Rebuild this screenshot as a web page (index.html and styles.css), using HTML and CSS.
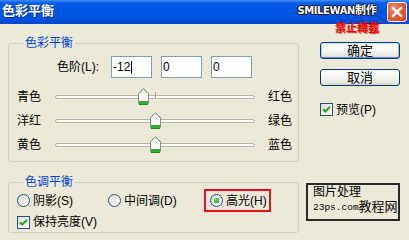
FILE: index.html
```html
<!DOCTYPE html>
<html lang="zh-CN">
<head>
  <meta charset="UTF-8">
  <title>色彩平衡</title>
  <link rel="stylesheet" href="styles.css">
</head>
<body>
  <div class="dialog">
    <div class="title-bar">
      <h1>色彩平衡</h1>
      <div class="credit"><span class="brand">SMILEWAN</span>制作</div>
      <div class="close-btn">
        <svg width="18" height="18" viewBox="0 0 18 18">
          <path d="M5 5L13 13M13 5L5 13" stroke="white" stroke-width="2.4" stroke-linecap="square"/>
        </svg>
      </div>
    </div>

    <div class="dialog-body">
      <div class="left-col">
        <fieldset class="group">
          <legend>色彩平衡</legend>
          <div class="levels">
            <span class="levels-label">色阶(L):</span>
            <div class="num-box">-12<span class="caret"></span></div>
            <div class="num-box">0</div>
            <div class="num-box">0</div>
          </div>

          <div class="sliders">
            <div class="slider-row">
              <span class="slider-label">青色</span>
              <div class="track">
                <div class="tick"></div>
                <div class="thumb" style="left: 44%">
                  <svg width="11" height="17" viewBox="0 0 11 17">
                    <path d="M5.5 0.5L10.5 5.5V15.5H0.5V5.5Z" fill="#f7f7f3" stroke="#8e8d86"/>
                    <path d="M5.5 1.6L9.4 5.5M5.5 1.6L1.6 5.5" stroke="#a9dca9"/>
                    <rect x="1" y="13" width="9" height="3" fill="#2fae2f"/>
                    <path d="M1 16.5H10" stroke="#1d8a1d"/>
                  </svg>
                </div>
              </div>
              <span class="slider-label">红色</span>
            </div>
            <div class="slider-row">
              <span class="slider-label">洋红</span>
              <div class="track">
                <div class="tick"></div>
                <div class="thumb" style="left: 50%">
                  <svg width="11" height="17" viewBox="0 0 11 17">
                    <path d="M5.5 0.5L10.5 5.5V15.5H0.5V5.5Z" fill="#f7f7f3" stroke="#8e8d86"/>
                    <path d="M5.5 1.6L9.4 5.5M5.5 1.6L1.6 5.5" stroke="#a9dca9"/>
                    <rect x="1" y="13" width="9" height="3" fill="#2fae2f"/>
                    <path d="M1 16.5H10" stroke="#1d8a1d"/>
                  </svg>
                </div>
              </div>
              <span class="slider-label">绿色</span>
            </div>
            <div class="slider-row">
              <span class="slider-label">黄色</span>
              <div class="track">
                <div class="tick"></div>
                <div class="thumb" style="left: 50%">
                  <svg width="11" height="17" viewBox="0 0 11 17">
                    <path d="M5.5 0.5L10.5 5.5V15.5H0.5V5.5Z" fill="#f7f7f3" stroke="#8e8d86"/>
                    <path d="M5.5 1.6L9.4 5.5M5.5 1.6L1.6 5.5" stroke="#a9dca9"/>
                    <rect x="1" y="13" width="9" height="3" fill="#2fae2f"/>
                    <path d="M1 16.5H10" stroke="#1d8a1d"/>
                  </svg>
                </div>
              </div>
              <span class="slider-label">蓝色</span>
            </div>
          </div>
        </fieldset>

        <fieldset class="group tone">
          <legend>色调平衡</legend>
          <div class="tone-row">
            <label class="radio-item shadows"><span class="radio"></span>阴影(S)</label>
            <label class="radio-item midtones"><span class="radio"></span>中间调(D)</label>
            <label class="radio-item highlight"><span class="radio checked"><span class="dot"></span></span>高光(H)</label>
          </div>
          <label class="check-item keep-lum">
            <span class="checkbox">
              <svg width="11" height="11" viewBox="0 0 11 11">
                <path d="M2 5.2L4.3 7.6L9 2.8" fill="none" stroke="#21a121" stroke-width="2"/>
              </svg>
            </span>保持亮度(V)
          </label>
        </fieldset>
      </div>

      <div class="right-col">
        <div class="no-repost">禁止轉載</div>
        <button class="btn default">确定</button>
        <button class="btn">取消</button>
        <label class="check-item preview">
          <span class="checkbox">
            <svg width="11" height="11" viewBox="0 0 11 11">
              <path d="M2 5.2L4.3 7.6L9 2.8" fill="none" stroke="#21a121" stroke-width="2"/>
            </svg>
          </span>预览(P)
        </label>
        <div class="watermark">
          <div class="wm-top">图片处理</div>
          <div class="wm-bottom">
            <span class="wm-url">23ps.com</span><span class="wm-name">教程网</span>
          </div>
        </div>
      </div>
    </div>
  </div>
</body>
</html>
```

FILE: styles.css
```css
body {
  margin: 0;
  font-family: "Liberation Sans", "Noto Sans CJK SC", sans-serif;
  font-size: 12px;
  line-height: 14px;
  color: #000;
  background-color: #ece9d8;
}

.dialog {
  width: 409px;
  height: 240px;
  overflow: hidden;
}

/* title bar */
.title-bar {
  height: 24px;
  display: flex;
  align-items: flex-start;
  background: linear-gradient(to bottom, #3d8df5 0, #0a5de8 3px, #0056e6 8px, #0053e0 18px, #0047ca 24px);
}

.title-bar h1 {
  margin: 0;
  padding-left: 2px;
  font-size: 13px;
  line-height: 22px;
  font-weight: bold;
  color: white;
  text-shadow: 1px 1px 0 #0b2f8e;
}

.credit {
  margin: 2px 10px 0 auto;
  font-size: 11px;
  line-height: 16px;
  font-weight: bold;
  color: white;
  text-shadow: -1px 0 0 #111, 1px 0 0 #111, 0 -1px 0 #111, 0 1px 0 #111;
}

.credit .brand {
  font-family: "DejaVu Sans", sans-serif;
  font-size: 10px;
  letter-spacing: -0.4px;
}

.close-btn {
  width: 20px;
  height: 20px;
  box-sizing: border-box;
  margin: 2px 2px 0 0;
  border: 1px solid #fff;
  border-radius: 3px;
  background: radial-gradient(circle at 30% 30%, #f08a68 0%, #e2572f 55%, #c8401b 100%);
  display: flex;
  align-items: center;
  justify-content: center;
}

/* body */
.dialog-body {
  display: flex;
}

.left-col {
  width: 291px;
  margin-left: 8px;
  padding-top: 13px;
}

.right-col {
  width: 94px;
  margin-left: 7px;
  display: flex;
  flex-direction: column;
  align-items: flex-start;
}

.group {
  margin: 0;
  padding: 0 0 4px;
  min-width: 0;
  border: 1px solid #d0d0bf;
  border-radius: 3px;
}

.group legend {
  margin-left: 14px;
  padding: 0 2px;
  font-size: 12px;
  line-height: 12px;
  color: #0046d5;
}

.group.tone {
  margin-top: 14px;
  padding-bottom: 3px;
}

/* levels */
.levels {
  display: flex;
  align-items: center;
  height: 22px;
  margin-top: 7px;
  padding-left: 48px;
}

.levels-label {
  margin-right: 12px;
}

.num-box {
  width: 41px;
  height: 22px;
  box-sizing: border-box;
  margin-right: 9px;
  padding-left: 1px;
  border: 1px solid #7f9db9;
  background-color: white;
  display: flex;
  align-items: center;
}

.caret {
  display: inline-block;
  width: 1px;
  height: 13px;
  margin-left: 1px;
  background-color: #000;
}

/* sliders */
.sliders {
  margin-top: 7px;
}

.slider-row {
  display: flex;
  align-items: center;
  height: 24px;
  padding-left: 8px;
}

.slider-label {
  width: 24px;
}

.track {
  position: relative;
  width: 200px;
  height: 4px;
  box-sizing: border-box;
  margin: 0 13px 0 14px;
  border: 1px solid #b7b4a7;
  border-radius: 2px;
  background-color: #fdfdfb;
}

.tick {
  position: absolute;
  left: 50%;
  top: -4px;
  width: 1px;
  height: 6px;
  background-color: #a6a49a;
}

.thumb {
  position: absolute;
  top: -8px;
  width: 11px;
  height: 17px;
  margin-left: -5px;
}

.thumb svg {
  display: block;
}

/* tone balance */
.tone-row {
  display: flex;
  align-items: center;
  height: 23px;
  margin-top: 1px;
  padding-left: 8px;
}

.radio-item {
  display: flex;
  align-items: center;
  gap: 3px;
}

.radio-item.shadows {
  width: 91px;
}

.radio-item.midtones {
  width: 96px;
}

.radio-item.highlight {
  height: 23px;
  box-sizing: border-box;
  padding: 0 2px 0 4px;
  border: 2px solid #e8101a;
}

.radio {
  width: 13px;
  height: 13px;
  box-sizing: border-box;
  border: 1px solid #1c5180;
  border-radius: 50%;
  background: linear-gradient(135deg, #d8d7cf 0%, #f4f4f0 60%, #ffffff 100%);
  display: flex;
  align-items: center;
  justify-content: center;
}

.radio .dot {
  width: 5px;
  height: 5px;
  border-radius: 50%;
  background: radial-gradient(circle at 40% 40%, #7fe07f 0%, #21a121 70%);
}

.check-item {
  display: flex;
  align-items: center;
  gap: 3px;
  height: 14px;
}

.check-item.keep-lum {
  margin: 3px 0 0 8px;
}

.checkbox {
  width: 13px;
  height: 13px;
  box-sizing: border-box;
  border: 1px solid #1c5180;
  background: linear-gradient(135deg, #dcdcd7 0%, #f6f6f3 60%, #ffffff 100%);
  display: flex;
  align-items: center;
  justify-content: center;
}

.checkbox svg {
  display: block;
}

/* right column */
.no-repost {
  margin: -1px 0 0 29px;
  font-size: 11px;
  line-height: 11px;
  font-weight: bold;
  color: #ff0000;
  text-shadow: 1px 1px 0 rgba(110, 0, 0, 0.55);
}

.btn {
  width: 80px;
  height: 17px;
  margin: 8px 0 0 14px;
  padding: 0;
  font-family: "Liberation Sans", "Noto Sans CJK SC", sans-serif;
  font-size: 13px;
  line-height: 15px;
  color: #000;
  border: 1px solid #003c74;
  border-radius: 3px;
  background: linear-gradient(to bottom, #ffffff 0%, #f4f4f0 55%, #e6e5de 85%, #d6d0c5 100%);
}

.btn.default {
  box-shadow: inset 0 1px 0 0 #cee7ff, inset 0 -1px 0 0 #6982ee, inset 1px 0 0 0 #b6d0f8, inset -1px 0 0 0 #98b6ee;
}

.btn + .btn {
  margin-top: 10px;
}

.check-item.preview {
  height: 13px;
  margin: 17px 0 0 14px;
}

.watermark {
  width: 94px;
  height: 38px;
  box-sizing: border-box;
  margin-top: 67px;
  padding: 1px 0 0 5px;
  border: 2px solid #2a2a2a;
  line-height: 13px;
}

.wm-bottom {
  display: flex;
  align-items: flex-end;
}

.wm-url {
  font-family: "Liberation Mono", "DejaVu Sans Mono", monospace;
  font-size: 9.5px;
  line-height: 12px;
  margin-bottom: 1px;
}

.wm-name {
  font-size: 13px;
  line-height: 16px;
}
```
